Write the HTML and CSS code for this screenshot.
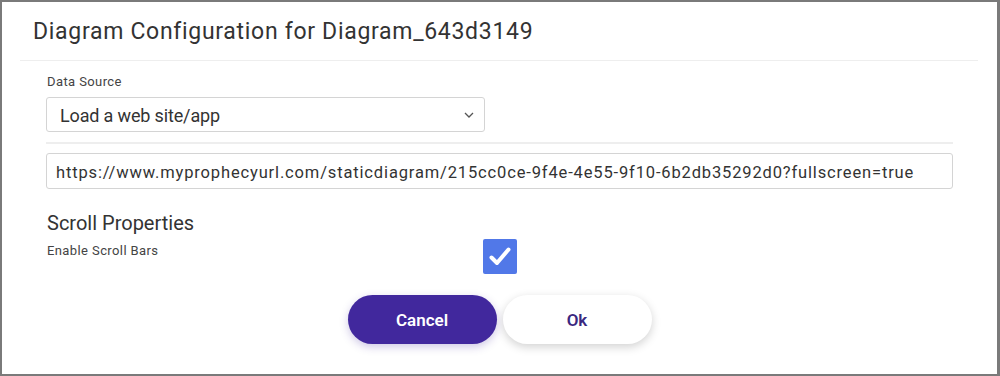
FILE: index.html
```html
<!DOCTYPE html>
<html>
    <head>
        <title>Diagram Configuration</title>
        <link rel="stylesheet" href="styles.css">
    </head>
    <body>
        <div class="modal">
            <div class="modal-header">
                <h2 class="modal-title">Diagram Configuration for Diagram_643d3149</h2>
            </div>
            <div class="modal-body">
                <label class="field-label">Data Source</label>
                <div class="select-box">
                    <span>Load a web site/app</span>
                    <svg class="chevron" width="10" height="6" viewBox="0 0 10 6"><path d="M1 1 L5 5 L9 1" fill="none" stroke="#555" stroke-width="1.3"/></svg>
                </div>
                <div class="divider"></div>
                <div class="text-input">https://www.myprophecyurl.com/staticdiagram/215cc0ce-9f4e-4e55-9f10-6b2db35292d0?fullscreen=true</div>

                <h3 class="section-title">Scroll Properties</h3>
                <div class="check-row">
                    <span class="field-label">Enable Scroll Bars</span>
                    <span class="checkbox">
                        <svg width="24" height="22" viewBox="0 0 24 22"><path d="M3.5 11.5 L9 17 L20.5 3.5" fill="none" stroke="#fff" stroke-width="4" stroke-linecap="round" stroke-linejoin="round"/></svg>
                    </span>
                </div>

                <div class="actions">
                    <button class="btn btn-cancel">Cancel</button>
                    <button class="btn btn-ok">Ok</button>
                </div>
            </div>
        </div>
    </body>
</html>
```

FILE: styles.css
```css
html, body { margin: 0; padding: 0; }
body { background: #7a7a7a; font-family: Roboto, "Liberation Sans", sans-serif; color: #333; }
.modal { background: #fff; margin: 2px 3px 0 2px; height: 372px; }
.modal-header { margin: 0 19px 0 18px; padding: 16px 0 0 13px; height: 42px; border-bottom: 1px solid #eee; }
.modal-title { margin: 0; font-size: 23px; font-weight: 400; line-height: 28px; color: #333; letter-spacing: 0.7px; }
.modal-body { padding: 12px 44px 0 44px; }
.field-label { display: block; padding-left: 1px; font-size: 13px; line-height: 18px; color: #444; letter-spacing: 0.4px; }
.select-box { margin-top: 6px; height: 33px; border: 1px solid #d4d4d4; border-radius: 3px; display: flex; align-items: center; justify-content: space-between; padding: 0 10px 0 13px; width: 414px; }
.select-box span { font-size: 18px; color: #333; letter-spacing: -0.15px; padding-top: 2px; }
.chevron { margin-top: 1px; }
.divider { height: 2px; background: #eee; margin: 10px 0 9px; }
.text-input { height: 34px; border: 1px solid #d4d4d4; border-radius: 3px; padding: 0 9px; font-size: 16.5px; line-height: 37px; color: #333; letter-spacing: 0.85px; white-space: nowrap; overflow: hidden; }
.section-title { margin: 22px 0 0; padding-left: 1px; font-size: 20px; font-weight: 400; line-height: 24px; color: #333; }
.check-row { display: flex; margin-top: 4px; }
.check-row .field-label { width: 436px; padding-top: 3px; }
.checkbox { width: 34px; height: 35px; background: #5178e8; border-radius: 2px; display: flex; align-items: center; justify-content: center; }
.actions { display: flex; justify-content: center; gap: 6px; margin-top: 21px; }
.btn { width: 149px; height: 49px; border-radius: 25px; border: none; font-family: Roboto, "Liberation Sans", sans-serif; font-size: 17px; font-weight: 600; cursor: pointer; }
.btn-cancel { background: #41289d; color: #fff; box-shadow: 0 3px 8px rgba(65, 40, 157, 0.25); }
.btn-ok { background: #fff; color: #3a2880; box-shadow: 0 3px 10px rgba(0, 0, 0, 0.18); }
```
